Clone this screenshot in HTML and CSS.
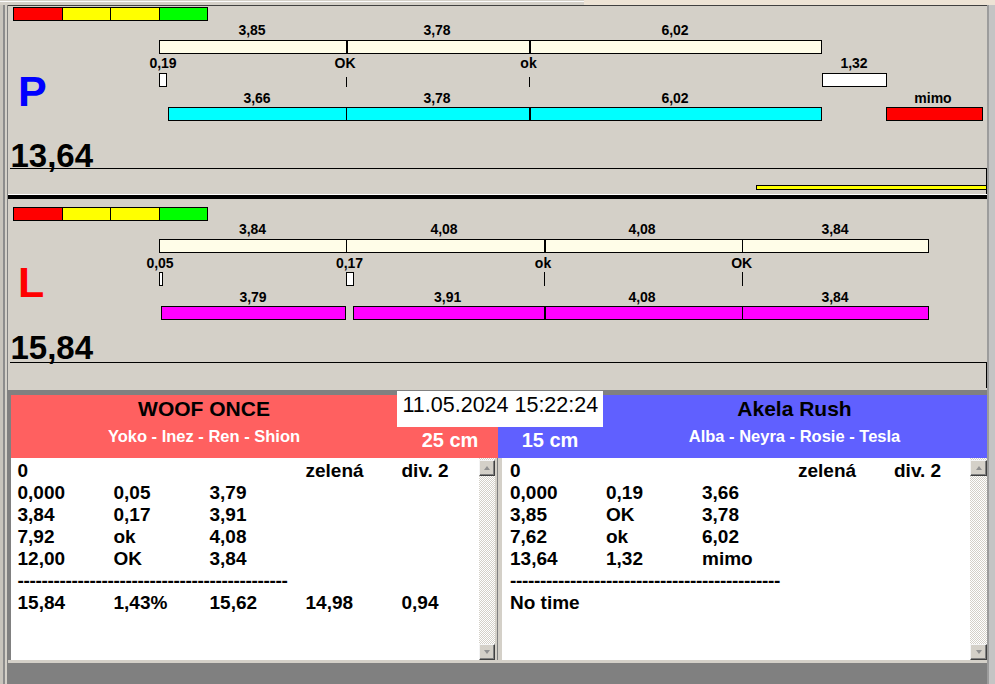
FILE: index.html
```html
<!DOCTYPE html>
<html>
<head>
<meta charset="utf-8">
<title>Agility</title>
<link rel="stylesheet" href="styles.css">
</head>
<body>
<div class="app">
  <div class="topbar"><div class="tabs"></div><div class="tabs-rest"></div></div>
  <div class="main">
    <div class="frame-l"></div>
    <div class="center">
      <section class="meter meter-p">
        <div class="legend"><span class="c-red"></span><span class="c-yel"></span><span class="c-yel"></span><span class="c-grn"></span></div>
        <div class="side side-p">P</div>
        <div class="total">13,64</div>
        <div class="track"><div class="progress"></div></div>

        <span class="lbl" style="left:244px;top:17px">3,85</span>
        <span class="lbl" style="left:429px;top:17px">3,78</span>
        <span class="lbl" style="left:667px;top:17px">6,02</span>
        <div class="bar ref" style="left:151px;top:34px;width:663px"><i style="width:186px"></i><i class="d2" style="width:183px"></i><i class="d2" style="width:292px"></i></div>

        <span class="lbl" style="left:155px;top:50px">0,19</span>
        <span class="lbl" style="left:337px;top:50px">OK</span>
        <span class="lbl" style="left:520.5px;top:50px">ok</span>
        <span class="lbl" style="left:846px;top:50px">1,32</span>
        <div class="mark" style="left:151px;top:67px;width:8px"></div>
        <div class="tick tick-p" style="left:338px;top:71px"></div>
        <div class="tick tick-p" style="left:521px;top:71px"></div>
        <div class="mark" style="left:814px;top:67px;width:65px"></div>

        <span class="lbl" style="left:249px;top:85px">3,66</span>
        <span class="lbl" style="left:429px;top:85px">3,78</span>
        <span class="lbl" style="left:667px;top:85px">6,02</span>
        <span class="lbl" style="left:925px;top:85px">mimo</span>
        <div class="bar cyan" style="left:160px;top:101px;width:654px"><i style="width:177px"></i><i class="d1" style="width:183px"></i><i class="d2" style="width:292px"></i></div>
        <div class="bar out" style="left:878px;top:101px;width:97px"></div>
      </section>

      <div class="sep"></div>

      <section class="meter meter-l">
        <div class="legend"><span class="c-red"></span><span class="c-yel"></span><span class="c-yel"></span><span class="c-grn"></span></div>
        <div class="side side-l">L</div>
        <div class="total">15,84</div>
        <div class="track"></div>

        <span class="lbl" style="left:244.5px;top:23px">3,84</span>
        <span class="lbl" style="left:436px;top:23px">4,08</span>
        <span class="lbl" style="left:634px;top:23px">4,08</span>
        <span class="lbl" style="left:827px;top:23px">3,84</span>
        <div class="bar ref" style="left:151px;top:40px;width:770px"><i style="width:186px"></i><i class="d1" style="width:198px"></i><i class="d2" style="width:198px"></i><i class="d1" style="width:186px"></i></div>

        <span class="lbl" style="left:152px;top:57px">0,05</span>
        <span class="lbl" style="left:341.5px;top:57px">0,17</span>
        <span class="lbl" style="left:535px;top:57px">ok</span>
        <span class="lbl" style="left:733.7px;top:57px">OK</span>
        <div class="mark" style="left:151px;top:73px;width:4px"></div>
        <div class="mark" style="left:338px;top:73px;width:8px"></div>
        <div class="tick tick-l" style="left:536px;top:73px"></div>
        <div class="tick tick-l" style="left:734px;top:73px"></div>

        <span class="lbl" style="left:245px;top:91px">3,79</span>
        <span class="lbl" style="left:439.7px;top:91px">3,91</span>
        <span class="lbl" style="left:634px;top:91px">4,08</span>
        <span class="lbl" style="left:827px;top:91px">3,84</span>
        <div class="bar mag" style="left:153px;top:107px;width:185px"></div>
        <div class="bar mag" style="left:345px;top:107px;width:576px"><i style="width:190px"></i><i class="d2" style="width:198px"></i><i class="d1" style="width:186px"></i></div>
      </section>

      <section class="results">
        <div class="heads">
          <div class="team team-red">
            <div class="team-info">
              <div class="team-name">WOOF ONCE</div>
              <div class="team-dogs">Yoko - Inez - Ren - Shion</div>
            </div>
            <div class="team-dist dist-red">25 cm</div>
          </div>
          <div class="team team-blue">
            <div class="team-dist">15 cm</div>
            <div class="team-info">
              <div class="team-name">Akela Rush</div>
              <div class="team-dogs">Alba - Neyra - Rosie - Tesla</div>
            </div>
          </div>
        </div>

        <div class="lists">
          <div class="list list-l">
            <div class="list-body">
              <div class="row"><span>0</span><span></span><span></span><span>zelená</span><span>div. 2</span></div>
              <div class="row"><span>0,000</span><span>0,05</span><span>3,79</span></div>
              <div class="row"><span>3,84</span><span>0,17</span><span>3,91</span></div>
              <div class="row"><span>7,92</span><span>ok</span><span>4,08</span></div>
              <div class="row"><span>12,00</span><span>OK</span><span>3,84</span></div>
              <div class="dashes">---------------------------------------------</div>
              <div class="row"><span>15,84</span><span>1,43%</span><span>15,62</span><span>14,98</span><span>0,94</span></div>
            </div>
            <div class="scroll">
              <div class="sbtn sbtn-up"></div>
              <div class="strack"></div>
              <div class="sbtn sbtn-down"></div>
            </div>
          </div>
          <div class="list-gap"></div>
          <div class="list list-r">
            <div class="list-body">
              <div class="row"><span>0</span><span></span><span></span><span>zelená</span><span>div. 2</span></div>
              <div class="row"><span>0,000</span><span>0,19</span><span>3,66</span></div>
              <div class="row"><span>3,85</span><span>OK</span><span>3,78</span></div>
              <div class="row"><span>7,62</span><span>ok</span><span>6,02</span></div>
              <div class="row"><span>13,64</span><span>1,32</span><span>mimo</span></div>
              <div class="dashes">---------------------------------------------</div>
              <div class="row"><span class="wide">No time</span></div>
            </div>
            <div class="scroll">
              <div class="sbtn sbtn-up"></div>
              <div class="strack"></div>
              <div class="sbtn sbtn-down"></div>
            </div>
          </div>
        </div>

        <div class="status"></div>

        <div class="date">11.05.2024 15:22:24</div>
      </section>
    </div>
    <div class="frame-r"></div>
  </div>
</div>
</body>
</html>
```

FILE: styles.css
```css
* { box-sizing: border-box; }
html, body { margin: 0; padding: 0; }
body {
  width: 995px;
  height: 684px;
  overflow: hidden;
  background: #d4d0c8;
  font-family: "Liberation Sans", Arial, sans-serif;
  color: #000;
}
.app { width: 995px; height: 684px; display: flex; flex-direction: column; }

.topbar { height: 5px; display: flex; flex: none; }
.tabs { width: 584px; background: linear-gradient(#d4d0c8 0 1px, #fbfbfb 1px 2px, #d4d0c8 2px); }
.tabs-rest { flex: 1; background: #ede3d5; }

.main { flex: 1; display: flex; min-height: 0; }
.frame-l {
  width: 8px; flex: none;
  background: linear-gradient(to right, #c8c4bc 0 3px, #8c8c8c 3px 5px, #d4d0c8 5px 7px, #808080 7px 8px);
}
.center { width: 979px; flex: none; display: flex; flex-direction: column; }
.frame-r { flex: 1; background: linear-gradient(to right, #9c9c9c 0 2px, #c4c4c4 2px); }

/* meters */
.meter {
  position: relative;
  flex: none;
  display: flex;
  flex-direction: column;
  align-items: flex-start;
  background: #d4d0c8;
}
.meter-p { height: 190px; border-top: 1px solid #404040; border-bottom: 1px solid #fff; }
.meter-l { height: 191px; }

.legend {
  display: grid;
  grid-template-columns: 48px 47px 48px 47px;
  gap: 1px;
  padding: 1px;
  background: #000;
  height: 14px;
  margin-left: 5px;
  flex: none;
}
.meter-p .legend { margin-top: 1px; }
.meter-l .legend { margin-top: 8px; }
.c-red { background: #ff0000; }
.c-yel { background: #ffff00; }
.c-grn { background: #00ff00; }

.side { font-weight: bold; font-size: 43px; line-height: 43px; margin-left: 10px; }
.side-p { color: #0000ff; margin-top: 49px; }
.side-l { color: #ff0000; margin-top: 40px; }

.total { font-weight: bold; font-size: 33px; line-height: 25px; margin-left: 2.5px; }
.meter-p .total { margin-top: 30px; }
.meter-l .total { margin-top: 31px; }

.track {
  width: 977px;
  height: 26px;
  margin-left: 2px;
  border-top: 1px solid #000;
  border-right: 1px solid #000;
  flex: none;
}
.meter-l .track { margin-top: 2px; }
.progress {
  margin: 16px 0 0 746px;
  width: 231px;
  height: 5px;
  border: 1px solid #000;
  background: #ffff00;
}

.lbl {
  position: absolute;
  transform: translateX(-50%);
  font-weight: bold;
  font-size: 14px;
  line-height: 14px;
  white-space: nowrap;
}
.bar {
  position: absolute;
  height: 14px;
  border: 1px solid #000;
  display: flex;
}
.bar > i { display: block; height: 100%; flex: none; }
.bar > .d1 { border-left: 1px solid #000; }
.bar > .d2 { border-left: 2px solid #000; }
.ref { background: #fffde8; }
.cyan { background: #00ffff; }
.mag { background: #ff00ff; }
.out { background: #ff0000; }
.mark { position: absolute; height: 14px; border: 1px solid #000; background: #fff; }
.tick { position: absolute; width: 1px; background: #000; }
.tick-p { height: 10px; }
.tick-l { height: 14px; }

.sep { height: 4px; background: #000; flex: none; }

/* results */
.results {
  position: relative;
  height: 294px;
  flex: none;
  background: #808080;
  padding: 5px 0 0 3px;
}
.heads { display: grid; grid-template-columns: 487px 489px; height: 63px; }
.team { display: grid; height: 63px; }
.team-red { background: #ff6060; grid-template-columns: 386px 101px; }
.team-blue { background: #6060ff; grid-template-columns: 104px 385px; }
.team-info { text-align: center; padding-top: 1.5px; }
.team-name { font-weight: bold; font-size: 21px; line-height: 24px; }
.team-dogs { font-weight: bold; font-size: 16.5px; line-height: 20px; color: #fff; margin-top: 5.6px; white-space: nowrap; }
.team-dist { font-weight: bold; font-size: 20px; line-height: 24px; color: #fff; text-align: center; padding-top: 33px; }
.dist-red { padding-left: 5px; }

.lists { display: grid; grid-template-columns: 486px 5px 485px; height: 202px; }
.list { display: flex; background: #fff; min-width: 0; }
.list-l { border-right: 2px solid #d4d0c8; }
.list-gap { background: #d4d0c8; border-left: 1px solid #808080; }
.list-body {
  flex: 1;
  min-width: 0;
  overflow: hidden;
  padding: 2.4px 0 0 6.5px;
  font-weight: bold;
  font-size: 19px;
  line-height: 22px;
  white-space: nowrap;
}
.list-r .list-body { padding-left: 8px; }
.row { display: grid; grid-template-columns: repeat(5, 96px); height: 22px; }
.row .wide { grid-column: 1 / 4; }
.dashes { height: 22px; letter-spacing: -0.33px; }

.scroll {
  width: 16px;
  flex: none;
  display: flex;
  flex-direction: column;
  background: repeating-conic-gradient(#ffffff 0 25%, #d4d0c8 0 50%) 0 0 / 2px 2px;
}
.list-r .scroll { width: 17px; }
.sbtn {
  height: 16px;
  flex: none;
  background: #d4d0c8;
  border: 1px solid;
  border-color: #f4f4f4 #404040 #404040 #f4f4f4;
  box-shadow: inset -1px -1px #808080;
  display: flex;
  align-items: center;
  justify-content: center;
}
.sbtn-up { margin-top: 2px; }
.sbtn::before { content: ""; width: 0; height: 0; border-left: 3.5px solid transparent; border-right: 3.5px solid transparent; }
.sbtn-up::before { border-bottom: 4px solid #909090; }
.sbtn-down::before { border-top: 4px solid #909090; }
.strack { flex: 1; }

.status { height: 24px; margin-left: -3px; border-top: 3px solid #d4d0c8; background: #808080; }

.date {
  position: absolute;
  left: 389px;
  top: 1px;
  width: 206px;
  height: 36px;
  background: #fff;
  font-size: 21.5px;
  line-height: 26px;
  padding: 1px 0 0 5.5px;
  white-space: nowrap;
}
```
